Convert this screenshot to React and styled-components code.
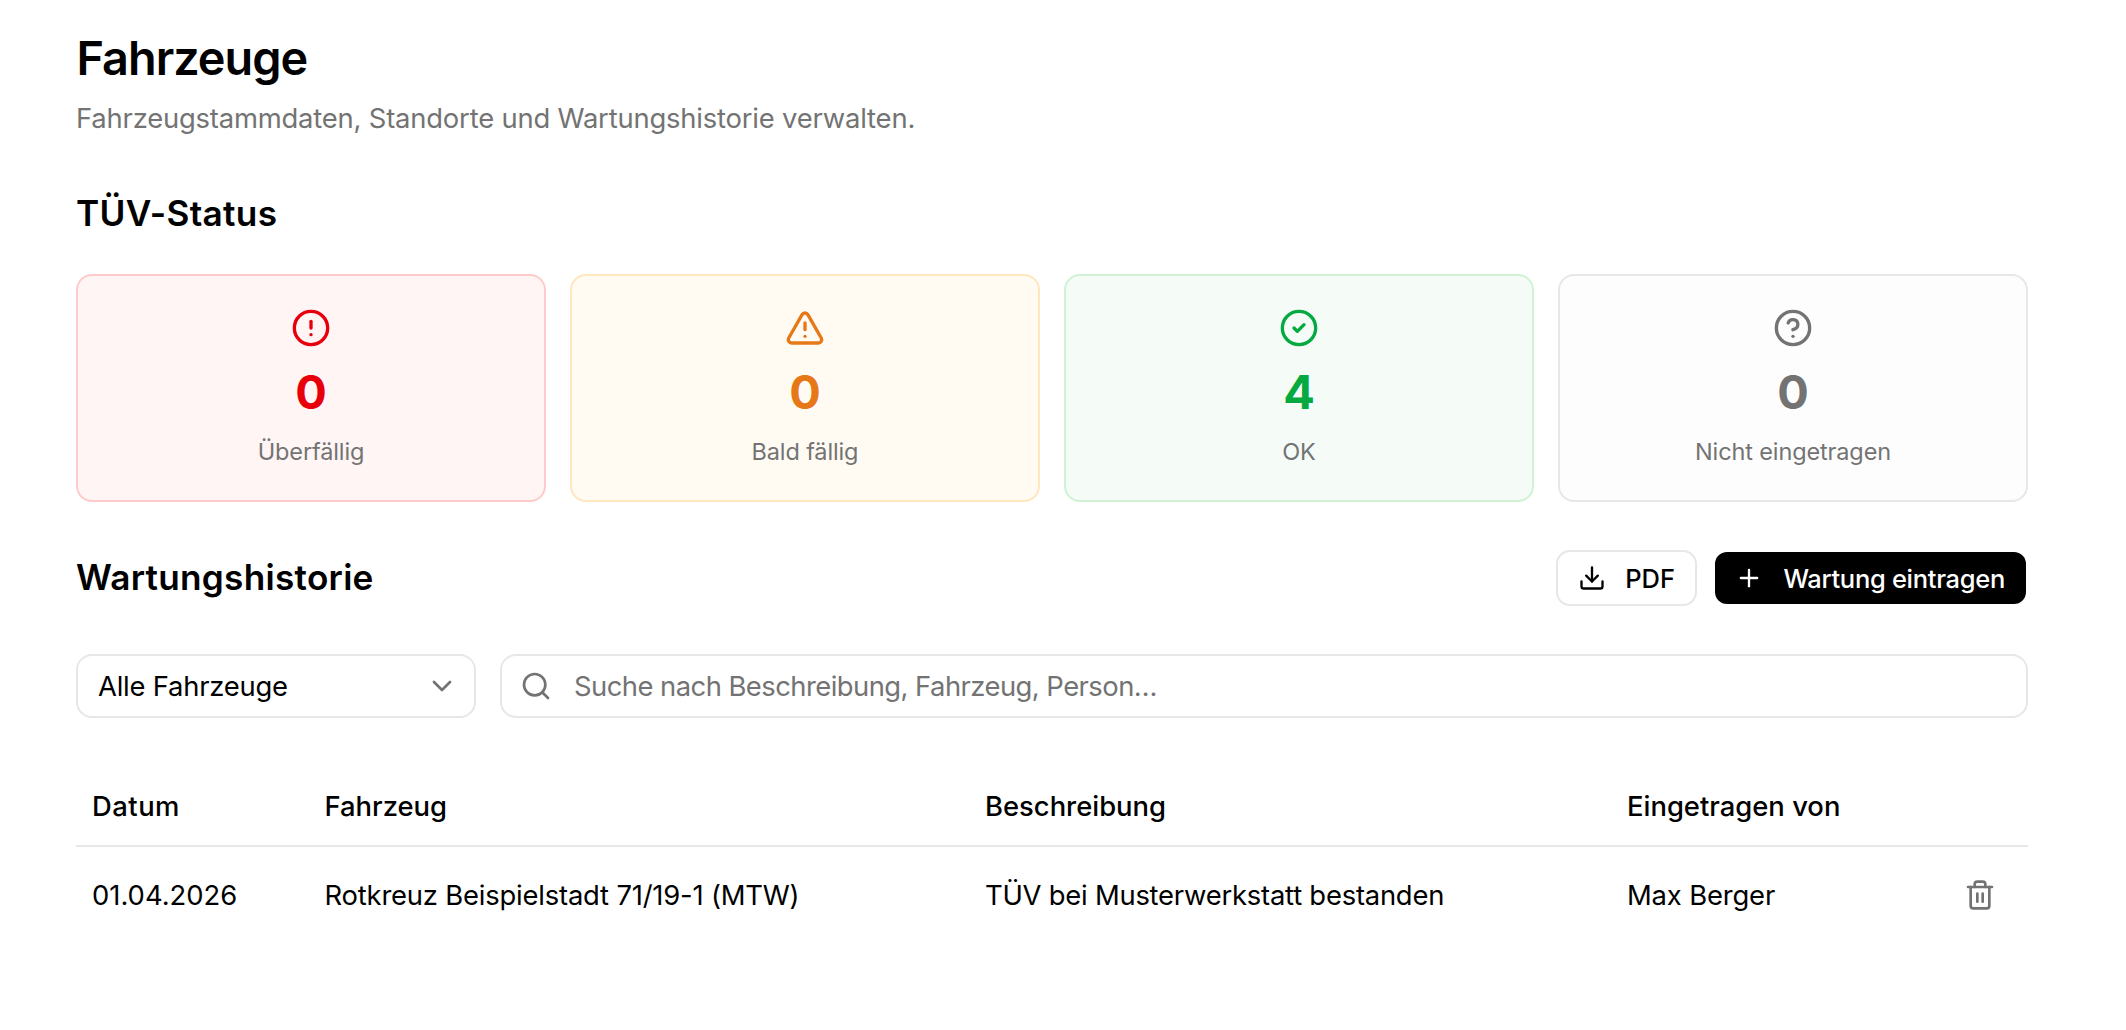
import React from "react";
import styled, { createGlobalStyle } from "styled-components";
import {
  CircleAlert,
  TriangleAlert,
  CircleCheck,
  CircleQuestionMark,
  Plus,
  Search,
  ChevronDown,
  Trash2,
} from "lucide-react";

const GlobalStyle = createGlobalStyle`
  *, *::before, *::after { box-sizing: border-box; }
  body {
    margin: 0;
    background: #fff;
    color: #000;
    font-family: Inter, "Liberation Sans", sans-serif;
    font-size: 27.4px;
    -webkit-font-smoothing: antialiased;
  }
  h1, h2, p { margin: 0; }
  button, input { font: inherit; color: inherit; }
`;

const Page = styled.main`
  display: flex;
  flex-direction: column;
  gap: 48px;
  padding: 26px 98px 0 76px;
`;

const PageHeader = styled.header`
  display: flex;
  flex-direction: column;
  gap: 8px;
`;

const Title = styled.h1`
  padding-left: 0.5px;
  font-size: 46.8px;
  font-weight: 600;
  line-height: 64px;
  letter-spacing: -1px;
`;

const Subtitle = styled.p`
  line-height: 40px;
  letter-spacing: -0.19px;
  color: #737373;
`;

const Section = styled.section`
  display: flex;
  flex-direction: column;
  gap: ${(p) => p.$gap}px;
`;

const SectionTitle = styled.h2`
  padding-bottom: 2px;
  font-size: 35.2px;
  font-weight: 600;
  line-height: 54px;
  letter-spacing: ${(p) => p.$tracking}px;
`;

const StatusGrid = styled.div`
  display: grid;
  grid-template-columns: repeat(4, 1fr);
  gap: 24px;
`;

const tones = {
  red: { fg: "#e7000b", bg: "#fff5f5", border: "#ffcaca" },
  orange: { fg: "#e67817", bg: "#fffbf3", border: "#ffe6bd" },
  green: { fg: "#05a941", bg: "#f5fbf7", border: "#cff2d5" },
  gray: { fg: "#737373", bg: "#fdfdfd", border: "#e7e7e7" },
};

const StatusCard = styled.div`
  display: flex;
  flex-direction: column;
  align-items: center;
  gap: 8px;
  height: 228px;
  padding: 32px;
  border: 2px solid ${(p) => tones[p.$tone].border};
  border-radius: 16px;
  background: ${(p) => tones[p.$tone].bg};
  color: ${(p) => tones[p.$tone].fg};
`;

const StatusCount = styled.span`
  font-size: 46.8px;
  font-weight: 700;
  line-height: 72px;
`;

const StatusLabel = styled.span`
  font-size: 23.5px;
  line-height: 32px;
  letter-spacing: -0.13px;
  color: #737373;
`;

const SectionBar = styled.div`
  display: flex;
  align-items: center;
  justify-content: space-between;
`;

const Actions = styled.div`
  display: flex;
  gap: 16px;
`;

const Button = styled.button`
  display: inline-flex;
  align-items: center;
  gap: ${(p) => (p.$primary ? 20.5 : 19)}px;
  height: 56px;
  padding: 0 ${(p) => (p.$primary ? 21 : 20)}px 0 20px;
  border: 2px solid ${(p) => (p.$primary ? "transparent" : "#e7e7e7")};
  border-radius: 14px;
  background: ${(p) => (p.$primary ? "#000" : "#fff")};
  background-clip: padding-box;
  color: ${(p) => (p.$primary ? "#fff" : "#000")};
  font-size: 25.5px;
  font-weight: 500;
  letter-spacing: ${(p) => (p.$primary ? -0.3 : -0.03)}px;
  white-space: nowrap;
`;

const Filters = styled.div`
  display: flex;
  gap: 24px;
`;

const Select = styled.button`
  display: flex;
  align-items: center;
  justify-content: space-between;
  width: 400px;
  height: 64px;
  padding: 0 16px 0 20px;
  border: 2px solid #e7e7e7;
  border-radius: 16px;
  background: #fff;
  letter-spacing: -0.22px;

  svg { color: #737373; }
`;

const SearchField = styled.label`
  display: flex;
  flex: 1;
  align-items: center;
  gap: 22px;
  height: 64px;
  padding: 0 18px;
  border: 2px solid #e7e7e7;
  border-radius: 16px;
  color: #737373;
`;

const SearchInput = styled.input`
  flex: 1;
  min-width: 0;
  padding: 0;
  border: 0;
  outline: 0;
  background: transparent;
  letter-spacing: -0.54px;

  &::placeholder { color: #737373; opacity: 1; }
`;

const Table = styled.table`
  width: 100%;
  table-layout: fixed;
  border-spacing: 0;
  text-align: left;
`;

const HeadCell = styled.th`
  width: ${(p) => p.$width};
  height: 81px;
  padding: 0 16px;
  border-bottom: 2px solid #e8e8e8;
  font-weight: 500;
  letter-spacing: ${(p) => p.$tracking || 0}px;
`;

const Cell = styled.td`
  height: 96px;
  padding: 0 16px;
  letter-spacing: ${(p) => p.$tracking || 0}px;
  white-space: nowrap;
`;

const IconButton = styled.button`
  display: flex;
  align-items: center;
  justify-content: center;
  width: 64px;
  height: 64px;
  padding: 0;
  border: 0;
  background: none;
  color: #737373;
`;

const DownloadIcon = () => (
  <svg width="28" height="28" viewBox="0 0 24 24" fill="none" stroke="currentColor" strokeWidth="2" strokeLinecap="round" strokeLinejoin="round">
    <path d="M12 15V3" />
    <path d="M21 15v4a2 2 0 0 1-2 2H5a2 2 0 0 1-2-2v-4" />
    <path d="m7 10 5 5 5-5" />
  </svg>
);

const statuses = [
  { tone: "red", icon: CircleAlert, count: 0, label: "Überfällig" },
  { tone: "orange", icon: TriangleAlert, count: 0, label: "Bald fällig" },
  { tone: "green", icon: CircleCheck, count: 4, label: "OK" },
  { tone: "gray", icon: CircleQuestionMark, count: 0, label: "Nicht eingetragen" },
];

export default function App() {
  return (
    <>
      <GlobalStyle />
      <Page>
        <PageHeader>
          <Title>Fahrzeuge</Title>
          <Subtitle>Fahrzeugstammdaten, Standorte und Wartungshistorie verwalten.</Subtitle>
        </PageHeader>

        <Section $gap={32}>
          <SectionTitle $tracking={0.32}>TÜV-Status</SectionTitle>
          <StatusGrid>
            {statuses.map(({ tone, icon: Icon, count, label }) => (
              <StatusCard key={label} $tone={tone}>
                <Icon size={40} />
                <StatusCount>{count}</StatusCount>
                <StatusLabel>{label}</StatusLabel>
              </StatusCard>
            ))}
          </StatusGrid>
        </Section>

        <Section $gap={48}>
          <SectionBar>
            <SectionTitle $tracking={0.26}>Wartungshistorie</SectionTitle>
            <Actions>
              <Button>
                <DownloadIcon />
                PDF
              </Button>
              <Button $primary>
                <Plus size={28} />
                Wartung eintragen
              </Button>
            </Actions>
          </SectionBar>

          <Filters>
            <Select>
              Alle Fahrzeuge
              <ChevronDown size={32} />
            </Select>
            <SearchField>
              <Search size={32} />
              <SearchInput placeholder="Suche nach Beschreibung, Fahrzeug, Person…" />
            </SearchField>
          </Filters>

          <Table>
            <thead>
              <tr>
                <HeadCell $width="232.5px" $tracking={0.5}>Datum</HeadCell>
                <HeadCell $width="660.5px">Fahrzeug</HeadCell>
                <HeadCell $width="642px">Beschreibung</HeadCell>
                <HeadCell $width="321px">Eingetragen von</HeadCell>
                <HeadCell $width="96px" />
              </tr>
            </thead>
            <tbody>
              <tr>
                <Cell>01.04.2026</Cell>
                <Cell $tracking={-0.19}>Rotkreuz Beispielstadt 71/19-1 (MTW)</Cell>
                <Cell $tracking={-0.23}>TÜV bei Musterwerkstatt bestanden</Cell>
                <Cell $tracking={-0.15}>Max Berger</Cell>
                <Cell>
                  <IconButton aria-label="Löschen">
                    <Trash2 size={32} />
                  </IconButton>
                </Cell>
              </tr>
            </tbody>
          </Table>
        </Section>
      </Page>
    </>
  );
}
